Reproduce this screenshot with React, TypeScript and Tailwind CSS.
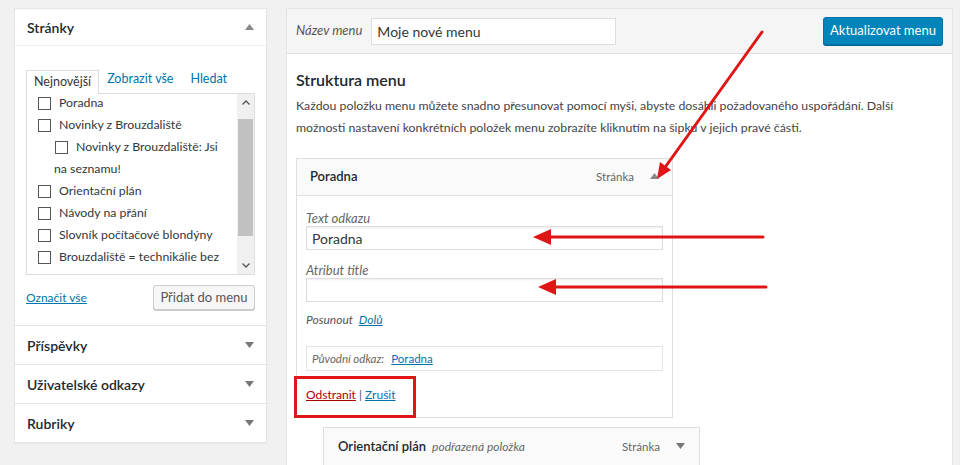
import React from 'react';

const font = "font-['Lato','Open_Sans',sans-serif]";

const pages: { label: string; indent?: boolean; wrap?: string }[] = [
  { label: 'Poradna' },
  { label: 'Novinky z Brouzdaliště' },
  { label: 'Novinky z Brouzdaliště: Jsi', indent: true, wrap: 'na seznamu!' },
  { label: 'Orientační plán' },
  { label: 'Návody na přání' },
  { label: 'Slovník počítačové blondýny' },
  { label: 'Brouzdaliště = technikálie bez' },
];

const Check = () => <span className="inline-block w-[13px] h-[13px] border border-[#555] bg-white shrink-0" />;

const TriUp = () => (
  <svg width="9" height="6" viewBox="0 0 9 6"><path d="M0 6 L4.5 0 L9 6 Z" fill="#888" /></svg>
);
const TriDown = () => (
  <svg width="9" height="6" viewBox="0 0 9 6"><path d="M0 0 L4.5 6 L9 0 Z" fill="#777" /></svg>
);

const Section = ({ title }: { title: string }) => (
  <div className="h-[39px] border-t border-[#e5e5e5] flex items-center justify-between pl-[12px] pr-[12px]">
    <span className="text-[14px] font-semibold text-[#23282d]">{title}</span>
    <TriDown />
  </div>
);

const LeftPanel = () => (
  <div className="w-[253px] self-start bg-white border border-[#e5e5e5] shadow-[0_1px_1px_rgba(0,0,0,0.04)]">
    <div className="h-[37px] flex items-center justify-between px-[12px] border-b border-[#eee]">
      <span className="text-[14px] font-semibold text-[#23282d]">Stránky</span>
      <TriUp />
    </div>
    <div className="px-[11px] pt-[23px] pb-[15px]">
      <div className="flex items-end h-[24px] text-[12.5px]">
        <div className="h-[24px] px-[7px] border border-b-0 border-[#ddd] bg-white text-[#32373c] flex items-center relative top-[1px] z-10">
          Nejnovější
        </div>
        <span className="text-[#0073aa] ml-[8px] mb-[4px]">Zobrazit vše</span>
        <span className="text-[#0073aa] ml-[17px] mb-[4px]">Hledat</span>
      </div>
      <div className="h-[182px] border border-[#ddd] flex text-[12.3px] text-[#32373c]">
        <div className="flex-1 pl-[11px] -mt-[2px]">
          {pages.map((p) => (
            <div key={p.label} className={p.indent ? 'pl-[17px]' : ''}>
              <div className="h-[22px] flex items-center gap-[8px]">
                <Check />
                <span className="whitespace-nowrap">{p.label}</span>
              </div>
              {p.wrap && <div className="h-[22px] flex items-center -ml-[1px]">{p.wrap}</div>}
            </div>
          ))}
        </div>
        <div className="w-[17px] bg-[#f0f0f0] flex flex-col items-center">
          <div className="h-[17px] flex items-center justify-center">
            <svg width="8" height="5" viewBox="0 0 8 5"><path d="M0.5 4.5 L4 1 L7.5 4.5" stroke="#555" strokeWidth="1.3" fill="none" /></svg>
          </div>
          <div className="w-[15px] h-[117px] mt-[8px] bg-[#c1c1c1]" />
          <div className="flex-1" />
          <div className="h-[17px] flex items-center justify-center">
            <svg width="8" height="5" viewBox="0 0 8 5"><path d="M0.5 0.5 L4 4 L7.5 0.5" stroke="#555" strokeWidth="1.3" fill="none" /></svg>
          </div>
        </div>
      </div>
      <div className="flex items-center justify-between mt-[10px]">
        <span className="text-[12px] text-[#0073aa] underline">Označit vše</span>
        <button className="h-[25px] w-[102px] text-[13px] text-[#555] bg-[#f7f7f7] border border-[#ccc] rounded-[3px] shadow-[0_1px_0_#ccc]">
          Přidat do menu
        </button>
      </div>
    </div>
    <Section title="Příspěvky" />
    <Section title="Uživatelské odkazy" />
    <Section title="Rubriky" />
  </div>
);

const Field = ({ label, value }: { label: string; value?: string }) => (
  <div>
    <div className="text-[13px] italic text-[#666] h-[16px] leading-[16px]">{label}</div>
    <div className="h-[24px] border border-[#ddd] shadow-[inset_0_1px_2px_rgba(0,0,0,0.07)] flex items-center px-[5px] text-[14px] text-[#32373c]">
      {value}
    </div>
  </div>
);

const RightPanel = () => (
  <div className="w-[667px] h-[470px] bg-white border border-[#e5e5e5] flex flex-col">
    <div className="h-[45px] bg-[#f5f5f5] border-b border-[#dfdfdf] flex items-center px-[9px] shrink-0">
      <span className="text-[13px] italic text-[#555]">Název menu</span>
      <div className="ml-[9px] w-[245px] h-[27px] bg-white border border-[#ddd] flex items-center px-[5px] text-[14px] text-[#32373c]">
        Moje nové menu
      </div>
      <div className="flex-1" />
      <button className="h-[28px] w-[120px] bg-[#0085ba] border border-[#0073aa] rounded-[3px] text-white text-[13px] shadow-[0_1px_0_#006799]">
        Aktualizovat menu
      </button>
    </div>
    <div className="px-[9px] pt-[14px]">
      <h3 className="text-[16px] font-semibold text-[#23282d] leading-[24px]">Struktura menu</h3>
      <p className="mt-[3px] text-[12.3px] leading-[22px] text-[#444] whitespace-nowrap">
        Každou položku menu můžete snadno přesunovat pomocí myši, abyste dosáhli požadovaného uspořádání. Další
        <br />
        možnosti nastavení konkrétních položek menu zobrazíte kliknutím na šipku v jejich pravé části.
      </p>
      <div className="mt-[19px] w-[377px] border border-[#dfdfdf]">
        <div className="h-[37px] bg-[#fafafa] border-b border-[#dfdfdf] flex items-center px-[13px]">
          <span className="text-[13px] font-semibold text-[#23282d]">Poradna</span>
          <div className="flex-1" />
          <span className="text-[11.5px] text-[#666]">Stránka</span>
          <span className="ml-[16px] mb-[2px]"><TriUp /></span>
        </div>
        <div className="px-[9px] pt-[14px] pb-[14px]">
          <Field label="Text odkazu" value="Poradna" />
          <div className="mt-[12px]">
            <Field label="Atribut title" />
          </div>
          <div className="mt-[10px] h-[16px] leading-[16px] text-[12px] italic text-[#555]">
            Posunout <span className="ml-[3px] text-[#0073aa] underline">Dolů</span>
          </div>
          <div className="mt-[18px] h-[25px] border border-[#e5e5e5] flex items-center px-[5px] text-[11.5px]">
            <span className="italic text-[#666]">Původní odkaz:</span>
            <span className="ml-[7px] text-[#0073aa] underline">Poradna</span>
          </div>
          <div className="mt-[16px] h-[16px] leading-[16px] text-[12px] text-[#555]">
            <span className="text-[#a00] underline">Odstranit</span> | <span className="text-[#0073aa] underline">Zrušit</span>
          </div>
        </div>
      </div>
      <div className="mt-[9px] ml-[27px] w-[377px] h-[39px] bg-[#fafafa] border border-[#dfdfdf] flex items-center px-[14px]">
        <span className="text-[13px] font-semibold text-[#23282d]">Orientační plán</span>
        <span className="ml-[6px] text-[12px] italic text-[#666]">podřazená položka</span>
        <div className="flex-1" />
        <span className="text-[11.5px] text-[#666]">Stránka</span>
        <span className="ml-[16px] mb-[2px]"><TriDown /></span>
      </div>
    </div>
  </div>
);

const Arrows = () => (
  <svg className="absolute inset-0 pointer-events-none" width="960" height="465" viewBox="0 0 960 465">
    <g stroke="#e01515" strokeWidth="3" strokeLinecap="round" fill="#e01515">
      <line x1="762" y1="32" x2="666" y2="166" />
      <line x1="763" y1="237" x2="548" y2="237" />
      <line x1="766" y1="287" x2="553" y2="287" />
    </g>
    <g fill="#e01515">
      <polygon points="657,179 671,170 660,162" />
      <polygon points="533,237 551,229 551,245" />
      <polygon points="538,287 556,279 556,295" />
    </g>
    <rect x="295.5" y="377.5" width="119" height="39" fill="none" stroke="#e01515" strokeWidth="3" />
  </svg>
);

export default function App() {
  return (
    <div className={`relative w-[960px] h-[465px] overflow-hidden bg-[#f1f1f1] flex gap-[19px] pl-[14px] pt-[8px] ${font}`}>
      <LeftPanel />
      <RightPanel />
      <Arrows />
    </div>
  );
}
